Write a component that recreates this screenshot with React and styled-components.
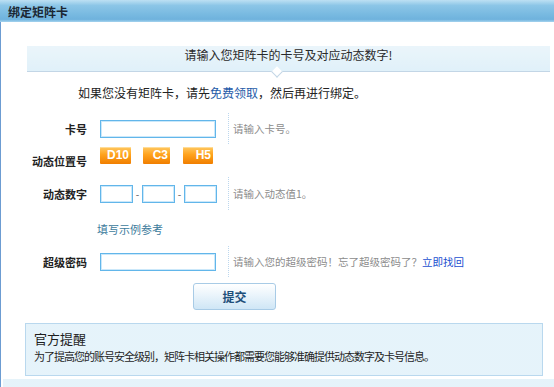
import styled, { createGlobalStyle } from "styled-components";

const Global = createGlobalStyle`
  body {
    margin: 0;
    background: #ffffff;
    font-family: "Noto Sans CJK SC", "Liberation Sans", sans-serif;
    color: #222;
  }
`;

const dots = (a) => `
  radial-gradient(circle, rgba(178, 218, 240, ${a}) 0.55px, transparent 0.85px) 0 0 / 2px 2px
`;

const Page = styled.div`
  width: 554px;
  height: 387px;
  display: flex;
  flex-direction: column;
  overflow: hidden;
`;

const Header = styled.div`
  height: 22px;
  flex-shrink: 0;
  display: flex;
  align-items: center;
  padding-left: 8px;
  font-size: 12px;
  font-weight: bold;
  color: #1b2733;
  background: linear-gradient(
    to bottom,
    #bde0f3 0%,
    #8cc6e7 25%,
    #76b8e0 70%,
    #6fb2dd 88%,
    #a5d3ee 100%
  );
`;

const Body = styled.div`
  flex: 1;
  display: flex;
  flex-direction: column;
  border-left: 1px solid #6c9cd2;
`;

const Intro = styled.div`
  position: relative;
  margin: 24px 4px 0 26px;
  height: 25px;
  border-bottom: 1px solid #c3d6e6;
  text-align: center;
  font-size: 12px;
  line-height: 18px;
  color: #2a2a2a;
  background: ${dots(0.55)}, linear-gradient(to bottom, #ffffff, #f1f9fd);

  &::after {
    content: "";
    position: absolute;
    left: 246px;
    bottom: -5px;
    width: 7px;
    height: 7px;
    background: #fff;
    border-right: 1px solid #c3d6e6;
    border-bottom: 1px solid #c3d6e6;
    transform: rotate(45deg);
  }
`;

const Note = styled.div`
  margin-top: 15px;
  padding-left: 77px;
  font-size: 12px;
  line-height: 12px;
  color: #222;
`;

const Link = styled.a`
  color: ${(p) => p.$color || "#1e5ba8"};
  text-decoration: none;
  cursor: pointer;
`;

const Row = styled.div`
  display: grid;
  grid-template-columns: 86px 141px 1fr;
  align-items: center;
  height: ${(p) => p.$h}px;
  margin-top: ${(p) => p.$mt || 0}px;
`;

const Label = styled.div`
  text-align: right;
  font-size: 11px;
  font-weight: bold;
  color: #222;
  align-self: ${(p) => (p.$low ? "end" : "center")};
  padding-bottom: ${(p) => (p.$low ? 8 : 0)}px;
`;

const Field = styled.div`
  display: flex;
  align-items: center;
  padding-left: 13px;
  align-self: ${(p) => (p.$top ? "start" : "center")};
  padding-top: ${(p) => (p.$top ? 3 : 0)}px;
`;

const Input = styled.input`
  box-sizing: border-box;
  width: ${(p) => p.$w}px;
  height: 18px;
  margin: 0;
  padding: 0 3px;
  border: 1px solid #62b6ea;
  box-shadow: inset 0 0 0 1px #cbe8fa;
  outline: none;
  background: #fff;
`;

const Dot = styled.span`
  width: 9px;
  text-align: center;
  font-size: 10px;
  color: #555;
`;

const Badge = styled.span`
  box-sizing: border-box;
  width: ${(p) => p.$w}px;
  height: 17px;
  margin-right: ${(p) => p.$mr || 0}px;
  padding-right: 2px;
  text-align: right;
  font-family: "Liberation Sans", Arial, sans-serif;
  font-size: 12px;
  font-weight: bold;
  line-height: 17px;
  color: #fff;
  border-radius: 1px;
  background: linear-gradient(to bottom, #ffc861 0%, #ffa21c 45%, #f07e00 100%);
  box-shadow: inset 0 1px 0 #ffdc97;
`;

const Hint = styled.div`
  height: 100%;
  display: flex;
  align-items: center;
  padding-left: 4px;
  border-left: 1px dotted #bcd7ee;
  font-size: 10.5px;
  color: #8c8c8c;
  white-space: nowrap;
`;

const Example = styled.div`
  margin-top: 12px;
  padding-left: 96px;
  font-size: 11px;
  line-height: 14px;
`;

const Submit = styled.button`
  box-sizing: border-box;
  width: 83px;
  height: 27px;
  margin: 6px 0 0 192px;
  padding: 0;
  border: 1px solid #a8cbe6;
  border-radius: 3px;
  background: linear-gradient(to bottom, #ffffff 0%, #eaf4fb 45%, #cfe6f6 100%);
  font-family: "Noto Sans CJK SC", sans-serif;
  font-size: 12px;
  font-weight: bold;
  color: #1d4f7a;
  cursor: pointer;
`;

const Notice = styled.div`
  box-sizing: border-box;
  width: 518px;
  height: 53px;
  margin: 13px 0 0 24px;
  padding: 7px 0 0 8px;
  border: 1px solid #b9d8ee;
  background: ${dots(0.5)}, #f6fbfe;
`;

const NoticeTitle = styled.div`
  font-size: 13px;
  line-height: 16px;
  color: #1e1e1e;
`;

const NoticeText = styled.div`
  margin-top: 2px;
  font-size: 11px;
  line-height: 14px;
  letter-spacing: -1px;
  color: #1e1e1e;
  white-space: nowrap;
`;

const Foot = styled.div`
  flex: 1;
  margin: 3px 0 0 2px;
  background: ${dots(0.55)}, #f8fcfe;
`;

export default function App() {
  return (
    <Page>
      <Global />
      <Header>绑定矩阵卡</Header>
      <Body>
        <Intro>请输入您矩阵卡的卡号及对应动态数字!</Intro>
        <Note>
          如果您没有矩阵卡，请先<Link>免费领取</Link>，然后再进行绑定。
        </Note>

        <Row $h={31} $mt={14}>
          <Label>卡号</Label>
          <Field>
            <Input $w={116} />
          </Field>
          <Hint>请输入卡号。</Hint>
        </Row>

        <Row $h={33}>
          <Label $low>动态位置号</Label>
          <Field $top>
            <Badge $w={31} $mr={12}>D10</Badge>
            <Badge $w={27} $mr={13}>C3</Badge>
            <Badge $w={30}>H5</Badge>
          </Field>
        </Row>

        <Row $h={33}>
          <Label>动态数字</Label>
          <Field>
            <Input $w={33} />
            <Dot>-</Dot>
            <Input $w={33} />
            <Dot>-</Dot>
            <Input $w={33} />
          </Field>
          <Hint>请输入动态值1。</Hint>
        </Row>

        <Example>
          <Link $color="#3d7b9c">填写示例参考</Link>
        </Example>

        <Row $h={31} $mt={10}>
          <Label>超级密码</Label>
          <Field>
            <Input $w={116} type="password" />
          </Field>
          <Hint>
            请输入您的超级密码！忘了超级密码了？
            <Link $color="#1a4fd0">立即找回</Link>
          </Hint>
        </Row>

        <div>
          <Submit>提交</Submit>
        </div>

        <Notice>
          <NoticeTitle>官方提醒</NoticeTitle>
          <NoticeText>
            为了提高您的账号安全级别，矩阵卡相关操作都需要您能够准确提供动态数字及卡号信息。
          </NoticeText>
        </Notice>
        <Foot />
      </Body>
    </Page>
  );
}
